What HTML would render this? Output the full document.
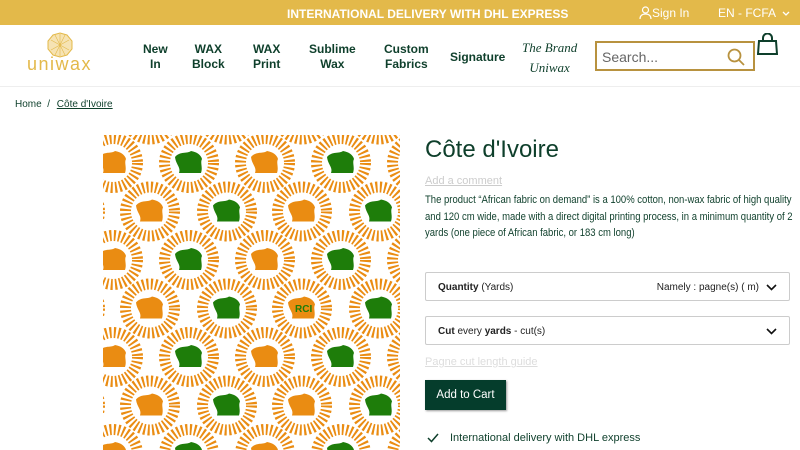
<!DOCTYPE html>
<html><head><meta charset="utf-8"><style>
*{margin:0;padding:0;box-sizing:border-box}
body{width:800px;height:450px;overflow:hidden;font-family:"Liberation Sans",sans-serif;background:#fff;position:relative}
.top{height:25px;background:#e3b94a;color:#fff;font-size:12px;font-weight:bold;position:relative}
.top .c{position:absolute;left:287px;top:7px}
.top .s{position:absolute;left:639px;top:6px;font-weight:normal;font-size:12px}
.top .l{position:absolute;left:718px;top:6px;font-weight:normal;font-size:12px}
.hdr{height:62px;border-bottom:1px solid #eee;position:relative}
.nav{position:absolute;color:#0e3f2b;font-size:12px;font-weight:bold;text-align:center;line-height:15px}
.logo{position:absolute;left:27px;top:54px;color:#e3b94a;font-size:18px;letter-spacing:1.5px}
.search{position:absolute;left:595px;top:41px;width:160px;height:30px;border:2px solid #b8923f;font-size:14px;color:#666;padding:6px 5px}
.bc{position:absolute;left:15px;top:99px;font-size:10px;color:#0e3f2b}
.bc u{margin-left:4px}
h1{position:absolute;left:425px;top:136px;font-weight:normal;font-size:24px;color:#0e3f2b}
.add{position:absolute;left:425px;top:175px;font-size:11px;color:#ccc;text-decoration:underline}
.desc{position:absolute;left:425px;top:192px;width:440px;font-size:10.8px;line-height:16.5px;color:#0e3f2b;white-space:nowrap;transform:scaleX(.88);transform-origin:0 0}
.sel{position:absolute;left:425px;width:365px;height:29px;border:1px solid #ccc;border-radius:2px;font-size:10px;color:#222;padding:9px 12px}
.sel .r{position:absolute;right:30px;top:9px}
.chev{position:absolute;right:12px;top:9px;width:11px;height:10px}
.guide{position:absolute;left:425px;top:356px;font-size:11px;color:#ddd;text-decoration:underline}
.btn{position:absolute;left:425px;top:380px;width:81px;height:30px;background:#053d2c;color:#fff;font-size:11.5px;padding:9px 0;text-align:center;box-shadow:1px 1px 2px #999}
.del{position:absolute;left:450px;top:432px;font-size:11px;color:#0e3f2b}
</style></head><body>
<div class="top"><span class="c">INTERNATIONAL DELIVERY WITH DHL EXPRESS</span>
<span class="s"><svg width="13" height="13" viewBox="0 0 13 13" style="vertical-align:-2px"><circle cx="6.5" cy="4" r="3" fill="none" stroke="#fff" stroke-width="1.2"/><path d="M1 13C1 9 4 8 6.5 8S12 9 12 13" fill="none" stroke="#fff" stroke-width="1.2"/></svg>Sign In</span>
<span class="l">EN - FCFA &nbsp;<svg width="8" height="6" viewBox="0 0 8 6"><path d="M1 1L4 4L7 1" fill="none" stroke="#fff" stroke-width="1.3"/></svg></span></div>
<div class="hdr">
<svg style="position:absolute;left:47px;top:7px" width="26" height="26" viewBox="0 0 26 26"><polygon points="13,1 20,3 25,9 25,17 20,23 13,25 6,23 1,17 1,9 6,3" fill="#f6e3b3" stroke="#e3b94a" stroke-width="1"/><path d="M4 8L22 18M4 18L22 8M13 2V24M8 3L18 23M18 3L8 23" stroke="#e3b94a" stroke-width=".6"/></svg>
</div>
<div class="logo">uniwax</div>
<div class="nav" style="left:143px;top:42px">New<br>In</div>
<div class="nav" style="left:192px;top:42px">WAX<br>Block</div>
<div class="nav" style="left:253px;top:42px">WAX<br>Print</div>
<div class="nav" style="left:309px;top:42px">Sublime<br>Wax</div>
<div class="nav" style="left:384px;top:42px">Custom<br>Fabrics</div>
<div class="nav" style="left:450px;top:50px">Signature</div>
<div class="nav" style="left:522px;top:38px;font-family:'Liberation Serif',serif;font-style:italic;font-weight:normal;font-size:13px;line-height:20px">The Brand<br>Uniwax</div>
<div class="search">Search...<svg style="position:absolute;right:8px;top:5px" width="18" height="18" viewBox="0 0 18 18"><circle cx="7.5" cy="7.5" r="6" fill="none" stroke="#b8923f" stroke-width="1.8"/><path d="M12 12L17 17" stroke="#b8923f" stroke-width="1.8"/></svg></div>
<svg style="position:absolute;left:757px;top:33px" width="21" height="22" viewBox="0 0 21 22"><path d="M6 8V5a4.5 4.5 0 0 1 9 0v3" fill="none" stroke="#0e3f2b" stroke-width="2"/><path d="M2 8H19L20 21H1Z" fill="none" stroke="#0e3f2b" stroke-width="2"/></svg>
<div class="bc">Home &nbsp;/ <u>Côte d'Ivoire</u></div>
<svg style="position:absolute;left:103px;top:135px" width="297" height="315">
<defs>
<circle id="ring" r="24.5" fill="none" stroke="#ea8c12" stroke-width="11" stroke-dasharray="2 2.3"/>
<path id="map" d="M-14-6C-9-12-2-9 2-12C8-11 12-8 13-4C11 0 14 4 12 10L-10 10C-8 4-13 2-14-6Z"/>
<g id="o"><use href="#ring"/><use href="#map" fill="#ea8c12"/></g>
<g id="g"><use href="#ring"/><use href="#map" fill="#1e7d0a"/></g>
<pattern id="q" width="152" height="97" patternUnits="userSpaceOnUse" x="10" y="28">
<use href="#o" x="0" y="0"/><use href="#o" x="152" y="0"/><use href="#o" x="0" y="97"/><use href="#o" x="152" y="97"/>
<use href="#g" x="76" y="0"/><use href="#g" x="76" y="97"/>
<use href="#o" x="37" y="48.5"/><use href="#g" x="114" y="48.5"/><use href="#g" x="-38" y="48.5"/><use href="#o" x="189" y="48.5"/>
<use href="#o" x="37" y="-48.5"/><use href="#g" x="114" y="-48.5"/><use href="#g" x="-38" y="-48.5"/><use href="#o" x="189" y="-48.5"/>
<use href="#o" x="37" y="145.5"/><use href="#g" x="114" y="145.5"/><use href="#g" x="-38" y="145.5"/><use href="#o" x="189" y="145.5"/>
</pattern>
</defs>
<rect width="297" height="315" fill="#fff"/>
<rect width="297" height="315" fill="url(#q)"/>
<text x="192" y="177" font-size="10" font-weight="bold" fill="#1e7d0a" font-family="Liberation Sans">RCI</text>
</svg>
<h1>Côte d'Ivoire</h1>
<div class="add">Add a comment</div>
<div class="desc">The product “African fabric on demand” is a 100% cotton, non-wax fabric of high quality<br>and 120 cm wide, made with a direct digital printing process, in a minimum quantity of 2<br>yards (one piece of African fabric, or 183 cm long)</div>
<div class="sel" style="top:272px"><b>Quantity</b> (Yards)<span class="r">Namely : pagne(s) ( m)</span><svg class="chev" viewBox="0 0 11 10"><path d="M1 3L5.5 7.5L10 3" fill="none" stroke="#111" stroke-width="1.6"/></svg></div>
<div class="sel" style="top:316px"><b>Cut</b> every <b>yards</b> - cut(s)<svg class="chev" viewBox="0 0 11 10"><path d="M1 3L5.5 7.5L10 3" fill="none" stroke="#111" stroke-width="1.6"/></svg></div>
<div class="guide">Pagne cut length guide</div>
<div class="btn">Add to Cart</div>
<svg style="position:absolute;left:427px;top:433px" width="12" height="10" viewBox="0 0 12 10"><path d="M1 5L4.5 8.5L11 1" fill="none" stroke="#0e3f2b" stroke-width="1.5"/></svg>
<div class="del">International delivery with DHL express</div>
</body></html>
